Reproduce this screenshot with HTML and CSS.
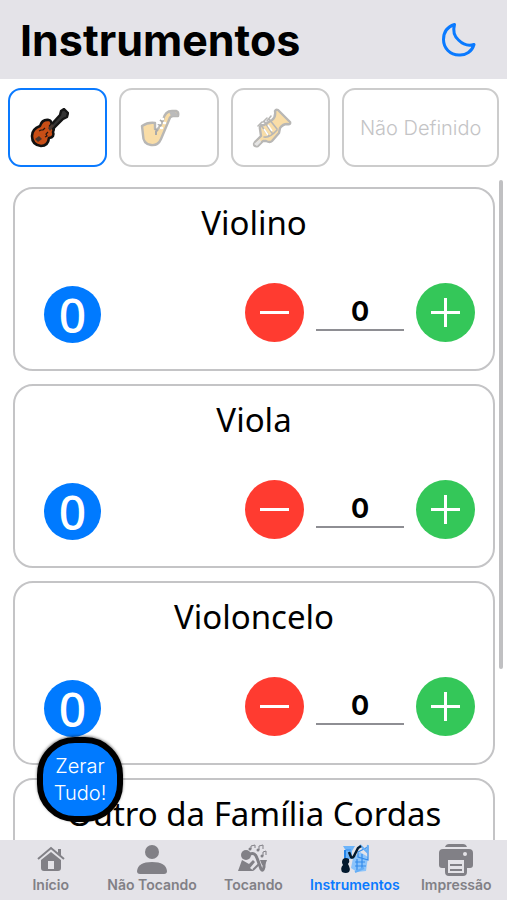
FILE: index.html
```html
<!DOCTYPE html>
<html lang="pt-BR">
<head>
<meta charset="utf-8">
<meta name="viewport" content="width=device-width, initial-scale=1">
<title>Instrumentos</title>
<link rel="stylesheet" href="styles.css">
</head>
<body>
<header class="header">
  <h1 class="header-title">Instrumentos</h1>
  <button class="theme" type="button" aria-label="Modo escuro">
    <svg width="36" height="36" viewBox="0 0 36 36"><path d="M13.500 2.500C12 8 13 14 17.500 18C22 22.500 28 24.200 33 22.500C31 29.500 25 33.500 18 33C9 33 2.500 26 2.500 17.500C2.500 10.500 6.500 4.800 13.500 2.500Z"/></svg>
  </button>
</header>
<nav class="families" aria-label="Famílias">
  <button class="family active" type="button" aria-label="Cordas">
    <svg width="40" height="40" viewBox="0 0 40 40">
      <path d="M22 17Q25 20 23 24Q25 29 19 30Q18 38 11 38Q2 37 2 28Q2 21 10 18Q12 11 19 12Q21 12 22 17Z" transform="translate(1 0)" fill="#c84e16" stroke="#111" stroke-width="2.600" stroke-linejoin="round"/>
      <path d="M21 18L31 7L32 3L35 1L39 5L38 9L34 11L24 21Z" fill="#333" stroke="#151515" stroke-width="2.400" stroke-linejoin="round"/>
      <path d="M19 20L23 16L25 18L21 23Z" fill="#493a33"/>
      <path d="M6 31L10 28L13 31L9 34Z" fill="#4b352c"/>
      <path d="M10 23L12 22L14 22L16 20M16 29L18 28L17 26L19 24" fill="none" stroke="#25160f" stroke-width="1.200"/>
    </svg>
  </button>
  <button class="family" type="button" aria-label="Madeiras">
    <svg width="40" height="40" viewBox="0 0 40 40">
      <path d="M2 18Q8 14 15 15V21L17 22Q21 18 23 12Q25 3 32 3H36Q39 4 38 8H33Q30 8 29 12L21 31Q18 38 11 37Q3 36 3 27Z" fill="#f9dda7" stroke="#b8b7b5" stroke-width="2.400" stroke-linejoin="round"/>
      <path d="M29 4Q37 2 38 8L31 8Z" fill="#bbb"/>
      <path d="M20 12L23 14M18 16L21 18M15 21L18 23M16 23V27" fill="none" stroke="#aaa" stroke-width="2"/>
      <path d="M22 11H23M19 15H20M24 15H25M21 20H22" stroke="#fff" stroke-width="2.500" stroke-linecap="round"/>
    </svg>
  </button>
  <button class="family" type="button" aria-label="Metais">
    <svg width="40" height="40" viewBox="0 0 40 40">
      <path d="M3 34L9 28L8 21Q7 17 12 17L20 12Q24 9 23 3Q24 1 26 2L38 14Q39 17 35 16Q31 16 28 20L27 25L20 33Q18 35 14 33H11L6 38Q2 39 2 36Z" fill="#f9dda7" stroke="#b8b7b5" stroke-width="2.400" stroke-linejoin="round"/>
      <path d="M2 36L8 31L9 34L5 38Z" fill="#e4e4e4"/>
      <path d="M6 18L10 14M11 14L15 10M15 13L19 8M8 16L17 28M12 13L20 25M17 11L25 21M12 29Q18 30 25 22" fill="none" stroke="#b8b7b5" stroke-width="1.600" stroke-linecap="round"/>
      <path d="M12 21L16 27M16 17L20 23" stroke="#fff" stroke-width="1.500"/>
    </svg>
  </button>
  <button class="family wide" type="button">Não Definido</button>
</nav>
<main class="list">
  <section class="card">
    <h2 class="name">Violino</h2>
    <div class="row">
      <output class="total">0</output>
      <div class="stepper">
        <button class="step minus" type="button" aria-label="Diminuir Violino"></button>
        <input class="count" type="text" inputmode="numeric" value="0" aria-label="Quantidade de Violino">
        <button class="step plus" type="button" aria-label="Aumentar Violino"></button>
      </div>
    </div>
  </section>
  <section class="card">
    <h2 class="name">Viola</h2>
    <div class="row">
      <output class="total">0</output>
      <div class="stepper">
        <button class="step minus" type="button" aria-label="Diminuir Viola"></button>
        <input class="count" type="text" inputmode="numeric" value="0" aria-label="Quantidade de Viola">
        <button class="step plus" type="button" aria-label="Aumentar Viola"></button>
      </div>
    </div>
  </section>
  <section class="card">
    <h2 class="name">Violoncelo</h2>
    <div class="row">
      <output class="total">0</output>
      <div class="stepper">
        <button class="step minus" type="button" aria-label="Diminuir Violoncelo"></button>
        <input class="count" type="text" inputmode="numeric" value="0" aria-label="Quantidade de Violoncelo">
        <button class="step plus" type="button" aria-label="Aumentar Violoncelo"></button>
      </div>
    </div>
  </section>
  <section class="card">
    <h2 class="name">Outro da Família Cordas</h2>
  </section>
</main>
<div class="scrollbar" aria-hidden="true"></div>
<button class="reset" type="button">Zerar<br>Tudo!</button>
<nav class="tabbar" aria-label="Principal">
  <a class="tab" href="#inicio">
    <svg width="36" height="34" viewBox="0 0 36 34" fill="currentColor">
      <path d="M5 19L18 8L31 19" fill="none" stroke="currentColor" stroke-width="2"/>
      <path d="M25 9H28V16L25 13Z"/>
      <path fill-rule="evenodd" d="M8 20L18 12L28 20V28Q28 31 25 31H11Q8 31 8 28ZM15 21V29H21V21Z"/>
    </svg>
    <span>Início</span>
  </a>
  <a class="tab" href="#nao-tocando">
    <svg width="36" height="34" viewBox="0 0 36 34" fill="currentColor">
      <circle cx="18" cy="12" r="7"/>
      <path d="M3 31Q4 22 18 22Q32 22 33 31Q33 34 30 34H6Q3 34 3 31Z"/>
    </svg>
    <span>Não Tocando</span>
  </a>
  <a class="tab" href="#tocando">
    <svg width="36" height="34" viewBox="0 0 36 34" fill="currentColor">
      <circle cx="11" cy="15" r="5"/>
      <path d="M3 31L7 20L14 24L18 20L20 22L15 28L19 31Z"/>
      <path d="M15 14Q20 12 22 18L26 29Q28 32 29 27V21" fill="none" stroke="currentColor" stroke-width="3"/>
      <path d="M25 20H32L30 25H27Z"/>
      <path d="M16 9V6L20 5V8M24 10V6L28 5V9M28 16V12L31 11V15" fill="none" stroke="currentColor" stroke-width="1"/>
      <circle cx="15" cy="9" r="1.500"/><circle cx="23" cy="10" r="1.500"/><circle cx="27" cy="16" r="1.500"/>
      <path d="M18 30L24 24" stroke="currentColor" stroke-width="2"/>
    </svg>
    <span>Tocando</span>
  </a>
  <a class="tab current" href="#instrumentos" aria-current="page">
    <svg width="36" height="34" viewBox="0 0 36 34">
      <path d="M6 6H18L15 11V19H9V11Z" fill="#6cb4fa"/>
      <path d="M16 18L23 12L31 17L29 31L20 32L14 28Z" fill="#8cc4fb"/>
      <path d="M21 12L31 7V20L21 17ZM18 22H28M18 26H29M20 19V30M25 14V29M9 10H14" fill="none" stroke="#348ceb" stroke-width="1.200"/>
      <path d="M23 5L30 12L31 5M18 32L27 28" fill="none" stroke="#65aef6" stroke-width="2"/>
      <path d="M12 12L14 17Q16 19 18 14L21 8L24 6" fill="none" stroke="#03192d" stroke-width="2.500"/>
      <path d="M8 10V19" stroke="#2484e8" stroke-width="2"/>
      <path d="M6 19Q9 17 12 19Q13 22 11 24Q14 29 12 32Q9 34 5 32Q3 28 6 25Q4 22 6 19Z" fill="#03192d"/>
    </svg>
    <span>Instrumentos</span>
  </a>
  <a class="tab" href="#impressao">
    <svg width="36" height="34" viewBox="0 0 36 34" fill="currentColor">
      <path d="M7 7Q8 4 11 4H25Q28 4 29 7Z"/>
      <path fill-rule="evenodd" d="M5 9H31Q35 9 35 13V25Q35 28 32 28H29V32Q29 36 25 36H11Q7 36 7 32V28H4Q1 28 1 25V13Q1 9 5 9ZM10 20V33H26V20Z"/>
      <path d="M12 25H24M12 30H24" stroke="currentColor" stroke-width="2"/>
      <circle cx="27" cy="14" r="2" fill="#e4e3e8"/>
    </svg>
    <span>Impressão</span>
  </a>
</nav>
</body>
</html>
```
FILE: styles.css
```css
* {
  box-sizing: border-box;
}

body {
  margin: 0;
  height: 100vh;
  display: flex;
  flex-direction: column;
  overflow: hidden;
  position: relative;
  background: #fff;
  color: #000;
  font-family: Inter, "Liberation Sans", sans-serif;
}

button {
  margin: 0;
  padding: 0;
  border: 0;
  font: inherit;
  cursor: pointer;
}

.header {
  display: flex;
  align-items: center;
  justify-content: space-between;
  padding: 16px 30px 15px 20px;
  background: #e4e3e8;
}

.header-title {
  margin: 0;
  font-size: 43px;
  line-height: 48px;
  font-weight: 700;
}

.theme {
  display: flex;
  background: none;
}

.theme path {
  fill: none;
  stroke: #0a7aff;
  stroke-width: 3;
  stroke-linejoin: round;
}

.families {
  display: grid;
  grid-template-columns: 99fr 99fr 99fr 156fr;
  gap: 12px;
  padding: 9px 8px 13px;
}

.family {
  display: flex;
  align-items: center;
  height: 79px;
  padding: 0 19px;
  border: 2px solid #ccc;
  border-radius: 13px;
  background: #fff;
  color: #c4c4c6;
  font-size: 20px;
  font-weight: 300;
}

.family.active {
  border-color: #0a7aff;
}

.family.wide {
  justify-content: center;
  padding: 0;
}

.list {
  flex: 1;
  min-height: 0;
  overflow: hidden;
  padding: 7px 12px 0 13px;
}

.card {
  height: 184px;
  margin-bottom: 13px;
  padding: 11px 18px 0 29px;
  border: 2px solid #c4c4c6;
  border-radius: 20px;
}

.name {
  margin: 0 11px 0 0;
  font-family: "Noto Sans", sans-serif;
  font-size: 33px;
  line-height: 46px;
  font-weight: 400;
  text-align: center;
  white-space: nowrap;
}

.row {
  display: flex;
  align-items: center;
  justify-content: space-between;
  margin-top: 36px;
}

.total {
  display: flex;
  align-items: center;
  justify-content: center;
  width: 57px;
  height: 57px;
  margin-top: 4px;
  border-radius: 50%;
  background: #007aff;
  color: #fff;
  font-family: "Noto Sans", sans-serif;
  font-size: 48px;
  line-height: 56px;
  font-weight: 500;
}

.stepper {
  display: flex;
  align-items: center;
  gap: 12px;
}

.step {
  width: 59px;
  height: 59px;
  border-radius: 50%;
  background-position: center;
  background-repeat: no-repeat;
}

.minus {
  background-color: #ff3b30;
  background-image: linear-gradient(#fff, #fff);
  background-size: 29px 3px;
}

.plus {
  background-color: #34c759;
  background-image: linear-gradient(#fff, #fff), linear-gradient(#fff, #fff);
  background-size: 29px 3px, 3px 29px;
}

.count {
  width: 88px;
  height: 36px;
  padding: 0 0 1px;
  border: 0;
  border-bottom: 2px solid #8e8e93;
  border-radius: 0;
  background: none;
  color: #000;
  font-family: Inter, sans-serif;
  font-size: 27px;
  font-weight: 700;
  text-align: center;
}

.scrollbar {
  position: absolute;
  top: 180px;
  right: 4px;
  width: 4px;
  height: 489px;
  border-radius: 2px;
  background: #c0c0c2;
}

.reset {
  position: absolute;
  left: 37px;
  bottom: 78px;
  width: 86px;
  height: 85px;
  border: 6px solid #000;
  border-radius: 38px;
  background: #007aff;
  color: #fff;
  font-size: 20px;
  line-height: 27px;
  font-weight: 300;
  box-shadow: 0 -1px 3px #0008;
}

.tabbar {
  display: grid;
  grid-template-columns: repeat(5, 1fr);
  height: 60px;
  background: #e4e3e8;
}

.tab {
  display: flex;
  flex-direction: column;
  align-items: center;
  gap: 3px;
  color: #818086;
  font-size: 14px;
  line-height: 16px;
  font-weight: 600;
  text-decoration: none;
  white-space: nowrap;
}

.tab svg {
  overflow: visible;
}

.tab.current {
  color: #0a7aff;
}
```
